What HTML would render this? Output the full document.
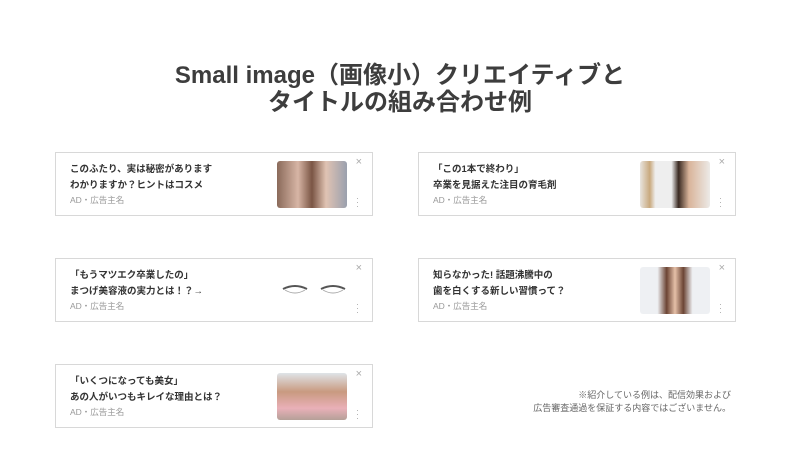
<!DOCTYPE html>
<html><head><meta charset="utf-8"><style>
body{margin:0;width:800px;height:450px;background:#fff;font-family:"Liberation Sans","Noto Sans CJK JP",sans-serif;position:relative;overflow:hidden}
h1{position:absolute;left:0;width:800px;top:62px;margin:0;text-align:center;font-size:24px;line-height:27px;color:#3d3d3d;font-weight:bold}
.c{position:absolute;width:316px;height:62px;border:1px solid #d8d8d8;background:#fff}
.t{position:absolute;left:14px;top:9px;font-size:9.5px;line-height:16px;font-weight:bold;color:#333}
.a{position:absolute;left:14px;top:41px;font-size:8.5px;color:#999}
.i{position:absolute;left:221px;top:8px;width:70px;height:47px;border-radius:3px}
.x{position:absolute;right:10px;top:3px;font-size:11px;color:#aaa}
.d{position:absolute;right:14px;top:43px;font-size:9px;color:#aaa;line-height:4px;width:2px}
.n{position:absolute;right:69px;top:389px;text-align:right;font-size:9px;line-height:13px;color:#666}
</style></head><body>
<h1>Small image（画像小）クリエイティブと<br>タイトルの組み合わせ例</h1>

<div class="c" style="left:55px;top:152px"><div class="t">このふたり、実は秘密があります<br>わかりますか？ヒントはコスメ</div><div class="a">AD・広告主名</div><div class="i" style="background:linear-gradient(90deg,#8a6a5a,#d7b5a5 30%,#7a5544 50%,#e0c3b3 70%,#9aa0ae)"></div><div class="x">×</div><div class="d">·<br>·<br>·</div></div>

<div class="c" style="left:418px;top:152px"><div class="t">「この1本で終わり」<br>卒業を見据えた注目の育毛剤</div><div class="a">AD・広告主名</div><div class="i" style="background:linear-gradient(90deg,#e8e4df,#c9a97e 14%,#eee 22%,#eee 45%,#3a2a22 55%,#d9b49a 70%,#eceae7)"></div><div class="x">×</div><div class="d">·<br>·<br>·</div></div>

<div class="c" style="left:55px;top:258px"><div class="t">「もうマツエク卒業したの」<br>まつげ美容液の実力とは！？→</div><div class="a">AD・広告主名</div><div class="i" style="background:#fff"><svg width="70" height="47"><path d="M6 22 q12 -6 24 0" stroke="#555" stroke-width="2" fill="none"/><path d="M8 23 q10 6 20 0" stroke="#aaa" fill="none"/><path d="M44 22 q12 -6 24 0" stroke="#555" stroke-width="2" fill="none"/><path d="M46 23 q10 6 20 0" stroke="#aaa" fill="none"/></svg></div><div class="x">×</div><div class="d">·<br>·<br>·</div></div>

<div class="c" style="left:418px;top:258px"><div class="t">知らなかった! 話題沸騰中の<br>歯を白くする新しい習慣って？</div><div class="a">AD・広告主名</div><div class="i" style="background:linear-gradient(90deg,#eef0f3 25%,#6b4434 38%,#e5c0a8 50%,#6b4434 62%,#eef0f3 75%)"></div><div class="x">×</div><div class="d">·<br>·<br>·</div></div>

<div class="c" style="left:55px;top:364px"><div class="t">「いくつになっても美女」<br>あの人がいつもキレイな理由とは？</div><div class="a">AD・広告主名</div><div class="i" style="background:linear-gradient(180deg,#dfe4e8,#c99a80 40%,#e9b0b8 75%,#b5a098)"></div><div class="x">×</div><div class="d">·<br>·<br>·</div></div>

<div class="n">※紹介している例は、配信効果および<br>広告審査通過を保証する内容ではございません。</div>
</body></html>
